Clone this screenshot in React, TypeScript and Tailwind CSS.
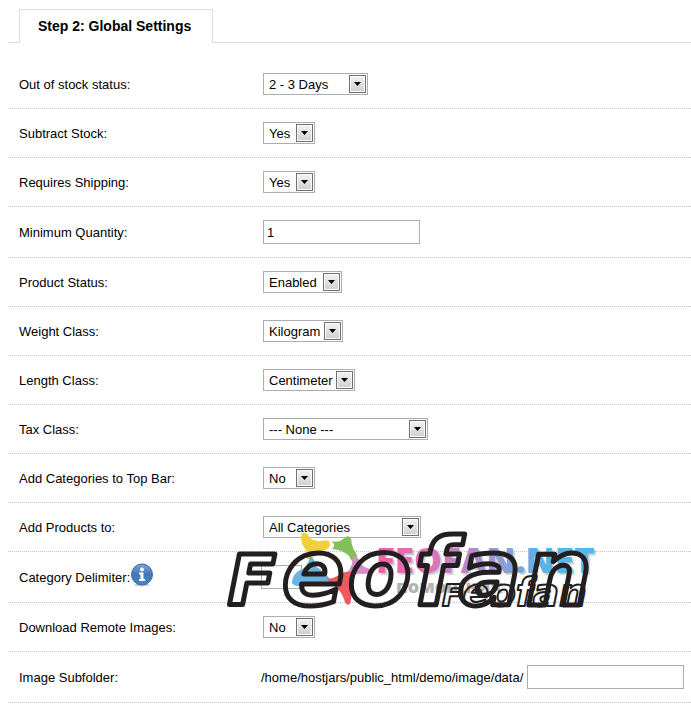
import { useState } from 'react';
import type { ReactNode } from 'react';

interface RowProps {
  id: string;
  label: string;
  icon?: ReactNode;
  children: ReactNode;
}

interface SelectBoxProps {
  id: string;
  options: string[];
  width: string;
}

function Row({ id, label, icon, children }: RowProps) {
  return (
    <div className="flex items-center border-b border-dotted border-[#c4c4c4] py-[13px] pl-[11px]">
      <div className="flex w-[244px] shrink-0 items-center">
        <label htmlFor={id} className="pt-[2px]">
          {label}
        </label>
        {icon}
      </div>
      {children}
    </div>
  );
}

function SelectBox({ id, options, width }: SelectBoxProps) {
  const [value, setValue] = useState(options[0]);

  return (
    <div className={`relative h-[22px] ${width}`}>
      <select
        id={id}
        value={value}
        onChange={(e) => setValue(e.target.value)}
        className="h-full w-full appearance-none border border-[#abadb3] bg-white pt-[2px] pl-[5px] text-[13px] leading-[18px]"
      >
        {options.map((option) => (
          <option key={option}>{option}</option>
        ))}
      </select>
      <span className="pointer-events-none absolute top-[2px] right-[2px] flex h-[18px] w-[17px] items-center justify-center border border-[#707070] bg-linear-to-b from-[#f3f3f3] to-[#cfcfcf] shadow-[inset_0_0_0_1px_#fafafa]">
        <svg width="7" height="4" viewBox="0 0 7 4" aria-hidden="true">
          <path d="M0 0h7L3.500 4z" fill="#000" />
        </svg>
      </span>
    </div>
  );
}

function InfoIcon() {
  return (
    <svg width="24" height="24" viewBox="0 0 24 24" className="-mt-3 -mb-2 shrink-0" aria-hidden="true">
      <defs>
        <linearGradient id="info" x1="0" y1="0" x2="0" y2="1">
          <stop offset="0" stopColor="#7ba6d6" />
          <stop offset="0.5" stopColor="#3f76b8" />
          <stop offset="1" stopColor="#4a86c8" />
        </linearGradient>
      </defs>
      <ellipse cx="12" cy="22" rx="8" ry="1.500" fill="#ccc" />
      <circle cx="12" cy="11.500" r="10.500" fill="url(#info)" stroke="#3867a3" />
      <circle cx="12" cy="6.500" r="1.900" fill="#fff" />
      <path d="M9 9.500h4.500v6.500H15v2H9v-2h1.500v-4.500H9z" fill="#fff" />
    </svg>
  );
}

function Logo() {
  return (
    <svg
      width="374"
      height="86"
      viewBox="222 526 374 86"
      className="pointer-events-none absolute bottom-[-9px] left-[214px]"
      role="img"
      aria-label="Feofan.net"
    >
      <defs>
        <linearGradient id="name" gradientUnits="userSpaceOnUse" x1="377" y1="0" x2="592" y2="0">
          <stop offset="0" stopColor="#f062a8" />
          <stop offset="0.250" stopColor="#dc74b8" />
          <stop offset="0.500" stopColor="#a592d0" />
          <stop offset="0.750" stopColor="#5cb2e6" />
          <stop offset="1" stopColor="#55b9ec" />
        </linearGradient>
      </defs>

      {/* ring of coloured figures */}
      <path d="M302 533q5-1 8 5 5 4 11 3 8-2 9 2 1 6-8 8-6 1-9 6-3 4-7 1-1-3 0-8-7-8-4-17z" fill="#f4cf3c" />
      <path d="M331 541q8 2 12-2 5-5 8-1 0 6 3 12 5 6 3 15-4-1-8-9-6-6-17-7 5-4-1-8z" fill="#85bf5c" />
      <path d="M353 556q7 2 8 8 3 4 10 5 0 5-8 5-7-1-11 3-6 2-5-4 6-7 6-17z" fill="#d88acb" />
      <path d="M310 556q5 2 5 10 8 4 16 14-2 4-10 4-9-2-16 2-11 1-13-3 0-9 8-13 8-2 10-14z" fill="#6db3e0" />
      <path d="M326 579q8 0 14-5 9-5 14 0 1 6-2 13 0 10-2 17-4 3-6-5-4-11-18-20z" fill="#ee5a5f" />

      <g fontFamily="Open Sans, sans-serif" fontSize="35" fontWeight="800">
        <text x="378" y="575" fill="#d2d2d2">FEOFAN.NET</text>
        <text x="376" y="573" fill="url(#name)">FEOFAN.NET</text>
      </g>
      <text x="396" y="593" fontFamily="Open Sans, sans-serif" fontSize="18" fontWeight="800" fill="#b3b3b3">
        помощник
      </text>

      <g
        fontFamily="DejaVu Sans, sans-serif"
        fontWeight="bold"
        fontStyle="italic"
        fill="none"
        stroke="#231f20"
        strokeLinejoin="round"
      >
        <text y="605" fontSize="92" strokeWidth="5">
          <tspan x="228" fontSize="70">F</tspan>
          <tspan x="282">e</tspan>
          <tspan x="348">o</tspan>
          <tspan x="415">f</tspan>
          <tspan x="459">a</tspan>
          <tspan x="526">n</tspan>
        </text>
        <text x="442" y="606" fontSize="39" strokeWidth="2">
          <tspan fontSize="30">F</tspan>eofan
        </text>
      </g>
    </svg>
  );
}

export default function App() {
  const [quantity, setQuantity] = useState('1');
  const [delimiter, setDelimiter] = useState('');
  const [subfolder, setSubfolder] = useState('');

  return (
    <main className="bg-white pt-[9px] pb-[5px] pl-2 font-['Liberation_Sans',Arial,sans-serif] text-[13px] leading-5 text-black">
      {/* Tab */}
      <div className="flex border-b border-[#ddd] pl-[11px]">
        <h1 className="-mb-px border border-b-0 border-[#ddd] bg-white pt-[6px] pr-[21px] pb-[7px] pl-[18px] text-[14px] leading-5 font-bold">
          Step 2: Global Settings
        </h1>
      </div>

      <form className="pt-[17px]" onSubmit={(e) => e.preventDefault()}>
        <Row id="stock-status" label="Out of stock status:">
          <SelectBox id="stock-status" options={['2 - 3 Days', 'In Stock', 'Out Of Stock']} width="w-[105px]" />
        </Row>
        <Row id="subtract" label="Subtract Stock:">
          <SelectBox id="subtract" options={['Yes', 'No']} width="w-[52px]" />
        </Row>
        <Row id="shipping" label="Requires Shipping:">
          <SelectBox id="shipping" options={['Yes', 'No']} width="w-[52px]" />
        </Row>
        <Row id="quantity" label="Minimum Quantity:">
          <input
            id="quantity"
            type="text"
            value={quantity}
            onChange={(e) => setQuantity(e.target.value)}
            className="h-6 w-[157px] border border-[#abadb3] px-[3px]"
          />
        </Row>
        <Row id="status" label="Product Status:">
          <SelectBox id="status" options={['Enabled', 'Disabled']} width="w-[79px]" />
        </Row>
        <Row id="weight" label="Weight Class:">
          <SelectBox id="weight" options={['Kilogram', 'Gram']} width="w-[80px]" />
        </Row>
        <Row id="length" label="Length Class:">
          <SelectBox id="length" options={['Centimeter', 'Inch']} width="w-[92px]" />
        </Row>
        <Row id="tax" label="Tax Class:">
          <SelectBox id="tax" options={['--- None ---', 'Taxable Goods']} width="w-[165px]" />
        </Row>
        <Row id="top-bar" label="Add Categories to Top Bar:">
          <SelectBox id="top-bar" options={['No', 'Yes']} width="w-[52px]" />
        </Row>
        <Row id="products" label="Add Products to:">
          <SelectBox id="products" options={['All Categories', 'Last Category']} width="w-[158px]" />
        </Row>
        <div className="relative">
          <Row id="delimiter" label="Category Delimiter:" icon={<InfoIcon />}>
            <input
              id="delimiter"
              type="text"
              value={delimiter}
              onChange={(e) => setDelimiter(e.target.value)}
              className="-ml-[2px] h-6 w-[41px] border border-[#abadb3] px-[3px]"
            />
          </Row>
          <Logo />
        </div>
        <Row id="download" label="Download Remote Images:">
          <SelectBox id="download" options={['No', 'Yes']} width="w-[52px]" />
        </Row>
        <Row id="subfolder" label="Image Subfolder:">
          <span className="mr-1 -ml-[2px] pt-[2px]">/home/hostjars/public_html/demo/image/data/</span>
          <input
            id="subfolder"
            type="text"
            value={subfolder}
            onChange={(e) => setSubfolder(e.target.value)}
            className="h-6 w-[157px] border border-[#abadb3] px-[3px]"
          />
        </Row>
      </form>
    </main>
  );
}
